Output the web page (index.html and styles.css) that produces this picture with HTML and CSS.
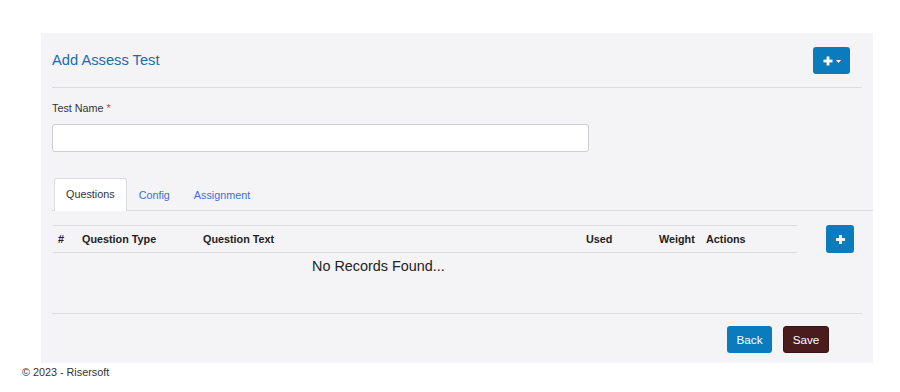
FILE: index.html
```html
<!DOCTYPE html>
<html>
<head>
<meta charset="utf-8">
<link rel="stylesheet" href="styles.css">
</head>
<body>
<div class="page">
  <div class="panel">
    <div class="panel-head">
      <h1 class="title">Add Assess Test</h1>
      <button class="btn btn-blue btn-add">
        <svg class="plus" width="10" height="10" viewBox="0 0 10 10"><rect x="3.6" y="0.5" width="2.8" height="9" fill="#fff"/><rect x="0.5" y="3.6" width="9" height="2.8" fill="#fff"/></svg>
        <svg class="caret" width="5" height="3" viewBox="0 0 5 3"><polygon points="0,0 5,0 2.5,3" fill="#fff"/></svg>
      </button>
    </div>
    <div class="form">
      <label class="label">Test Name <span class="req">*</span></label>
      <input class="input" type="text">
    </div>
    <div class="tabs">
      <div class="tab active">Questions</div>
      <div class="tab">Config</div>
      <div class="tab">Assignment</div>
    </div>
    <div class="grid-row">
      <table class="tbl">
        <thead>
          <tr>
            <th class="c-num">#</th>
            <th class="c-type">Question Type</th>
            <th class="c-text">Question Text</th>
            <th class="c-used">Used</th>
            <th class="c-weight">Weight</th>
            <th class="c-act">Actions</th>
          </tr>
        </thead>
        <tbody>
          <tr><td colspan="6" class="empty">No Records Found...</td></tr>
        </tbody>
      </table>
      <button class="btn btn-blue btn-plus">
        <svg width="9" height="9" viewBox="0 0 9 9"><rect x="3.1" y="0" width="2.8" height="9" fill="#fff"/><rect x="0" y="3.1" width="9" height="2.8" fill="#fff"/></svg>
      </button>
    </div>
    <div class="panel-foot">
      <button class="btn btn-blue btn-text btn-back">Back</button>
      <button class="btn btn-maroon btn-text btn-save">Save</button>
    </div>
  </div>
  <div class="copy">© 2023 - Risersoft</div>
</div>
</body>
</html>
```
FILE: styles.css
```css
html, body {
  margin: 0;
  padding: 0;
  background: #fff;
}
body {
  font-family: "Liberation Sans", Arial, sans-serif;
  font-size: 10.8px;
  line-height: 15.4px;
  color: #333;
}
.page {
  padding-top: 33px;
}
.panel {
  margin-left: 41px;
  width: 832px;
  height: 330px;
  background: #f4f4f6;
  box-sizing: border-box;
}
.panel-head {
  margin: 0 11px;
  padding: 14px 0 13px;
  display: flex;
  align-items: center;
  justify-content: space-between;
  border-bottom: 1px solid #dcdcdf;
}
.title {
  margin: 0;
  font-size: 14.7px;
  font-weight: normal;
  line-height: 16px;
  color: #1c6aae;
  position: relative;
  top: -1px;
}
.btn {
  border: none;
  border-radius: 3px;
  font-family: "Liberation Sans", Arial, sans-serif;
  color: #fff;
  padding: 0;
  display: inline-flex;
  align-items: center;
  justify-content: center;
  box-sizing: border-box;
}
.btn-blue {
  background: #0a7cbe;
}
.btn-maroon {
  background: #4b1c1d;
  border: 1px solid #3a1415;
}
.btn-add {
  width: 37px;
  height: 27px;
  margin-right: 12px;
  gap: 3px;
  padding-left: 1px;
}
.btn-add .caret {
  margin-top: 1px;
}
.form {
  padding: 13px 11px 0;
}
.label {
  display: block;
  font-size: 10.8px;
  line-height: 15.4px;
  color: #333;
}
.req {
  color: #e0393e;
}
.input {
  display: block;
  margin-top: 8px;
  width: 537px;
  height: 28px;
  box-sizing: border-box;
  border: 1px solid #cfcfd3;
  border-radius: 3px;
  background: #fff;
}
.tabs {
  margin-top: 26px;
  margin-left: 11px;
  padding-left: 2px;
  display: flex;
  border-bottom: 1px solid #dcdcdf;
}
.tab {
  height: 32px;
  line-height: 32px;
  padding: 0 11px;
  color: #3d6fd6;
  font-size: 10.8px;
  border: 1px solid transparent;
  border-bottom: none;
  margin-bottom: -1px;
}
.tab.active {
  background: #fff;
  color: #333;
  border-color: #dcdcdf;
  border-radius: 3px 3px 0 0;
  height: 33px;
  box-sizing: border-box;
  line-height: 31px;
}
.grid-row {
  margin-top: 14px;
  padding-left: 12px;
  display: flex;
  align-items: flex-start;
}
.tbl {
  width: 744px;
  border-collapse: collapse;
  table-layout: fixed;
}
.tbl th {
  text-align: left;
  font-weight: bold;
  font-size: 10.8px;
  color: #222;
  height: 26px;
  padding: 0 0 0 5px;
  border-top: 1px solid #dcdcdf;
  border-bottom: 1px solid #dcdcdf;
  white-space: nowrap;
}
.c-num { width: 19px; }
.c-type { width: 116px; }
.c-text { width: 378px; }
.c-used { width: 68px; }
.c-weight { width: 42px; }
.c-act { width: auto; }
.empty {
  padding: 3px 0 0 259px;
  font-size: 14.4px;
  line-height: 20.6px;
  color: #222;
}
.btn-plus {
  width: 28px;
  height: 28px;
  margin-left: 29px;
}
.panel-foot {
  margin: 36px 11px 0;
  border-top: 1px solid #dcdcdf;
  padding: 12px 33px 0 0;
  display: flex;
  justify-content: flex-end;
  gap: 11px;
}
.btn-text {
  height: 27px;
  font-size: 11.7px;
}
.btn-back {
  width: 45px;
}
.btn-save {
  width: 46px;
}
.copy {
  margin-top: 2px;
  margin-left: 22px;
  font-size: 10.8px;
  line-height: 15.4px;
  color: #333;
}
```
